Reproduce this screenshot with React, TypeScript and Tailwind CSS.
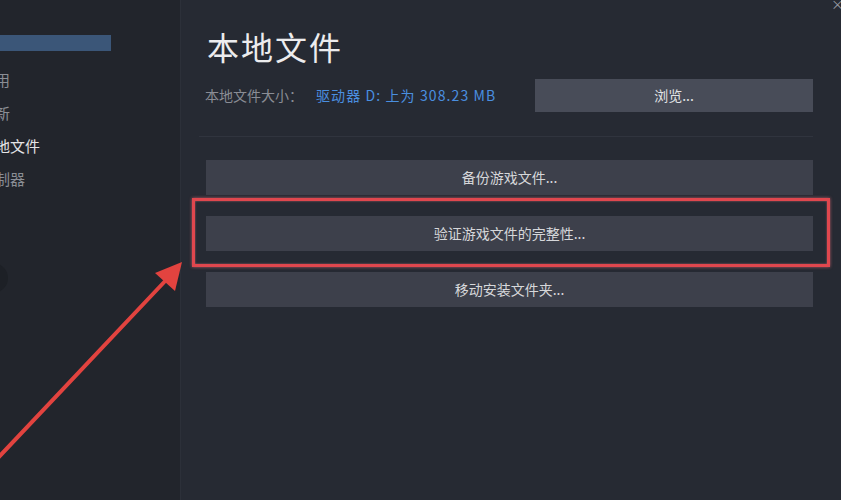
import React from "react";

const font = { fontFamily: '"Noto Sans CJK SC", "Noto Sans", sans-serif' };

function SideItem({ text, active }: { text: string; active?: boolean }) {
  return (
    <div
      className={`h-[33px] flex items-center text-[15px] -ml-[20px] whitespace-nowrap ${
        active ? "text-[#e4e4e6]" : "text-[#8b8e95]"
      }`}
    >
      {text}
    </div>
  );
}

function Btn({ label }: { label: string }) {
  return (
    <div className="h-[35px] bg-[#3d404b] flex items-center justify-center text-[14px] text-[#d6d7da]">
      {label}
    </div>
  );
}

export default function App() {
  return (
    <div
      className="relative w-[841px] h-[500px] overflow-hidden bg-[#262a33] flex"
      style={font}
    >
      {/* Sidebar */}
      <div className="w-[181px] shrink-0 bg-[#22252c] border-r border-[#2c3039] flex flex-col pt-[35px]">
        <div className="w-[111px] h-[16px] bg-[#3b5678]" />
        <div className="mt-[13px] flex flex-col">
          <SideItem text="通用" />
          <SideItem text="更新" />
          <SideItem text="本地文件" active />
          <SideItem text="控制器" />
        </div>
      </div>

      {/* Main */}
      <div className="flex-1 flex flex-col pt-[25px]">
        <div className="ml-[26px] h-[42px] leading-[42px] text-[32px] tracking-[2px] text-[#ececee]">
          本地文件
        </div>
        <div className="mt-[12px] flex items-center h-[33px]">
          <div className="ml-[24px] text-[14px] text-[#8a8d95] whitespace-nowrap">
            本地文件大小：
          </div>
          <div className="ml-[13px] text-[14px] tracking-[1.1px] text-[#4a8fe0] whitespace-nowrap">
            驱动器 D: 上为 308.23 MB
          </div>
          <div className="ml-auto mr-[28px] w-[278px] h-[33px] bg-[#484c58] flex items-center justify-center text-[14px] text-[#e2e3e6]">
            浏览...
          </div>
        </div>
        <div className="mt-[24px] ml-[18px] mr-[28px] border-t border-[#30343e]" />
        <div className="mt-[23px] ml-[25px] mr-[28px] flex flex-col gap-[21px]">
          <Btn label="备份游戏文件..." />
          <Btn label="验证游戏文件的完整性..." />
          <Btn label="移动安装文件夹..." />
        </div>
      </div>

      {/* left circle fragment */}
      <div className="absolute left-[-22px] top-[263px] w-[30px] h-[30px] rounded-full bg-[#1d2026]" />

      {/* top-right close fragment */}
      <div className="absolute right-[-3px] top-[-6px] text-[13px] text-[#9a9ca3]">×</div>

      {/* red highlight box */}
      <div className="absolute left-[192px] top-[198px] w-[638px] h-[69px] border-[3px] border-[#e0474e] shadow-[0_0_3px_rgba(240,110,120,0.7),inset_0_0_2px_rgba(240,120,130,0.7)]" />

      {/* red arrow */}
      <svg
        className="absolute left-0 top-0"
        width="841"
        height="500"
        viewBox="0 0 841 500"
      >
        <line x1="-4" y1="460" x2="168" y2="278" stroke="#e2433f" strokeWidth="4" strokeLinecap="round" />
        <polygon points="182,262 175,291 155,273" fill="#e2433f" />
      </svg>
    </div>
  );
}
